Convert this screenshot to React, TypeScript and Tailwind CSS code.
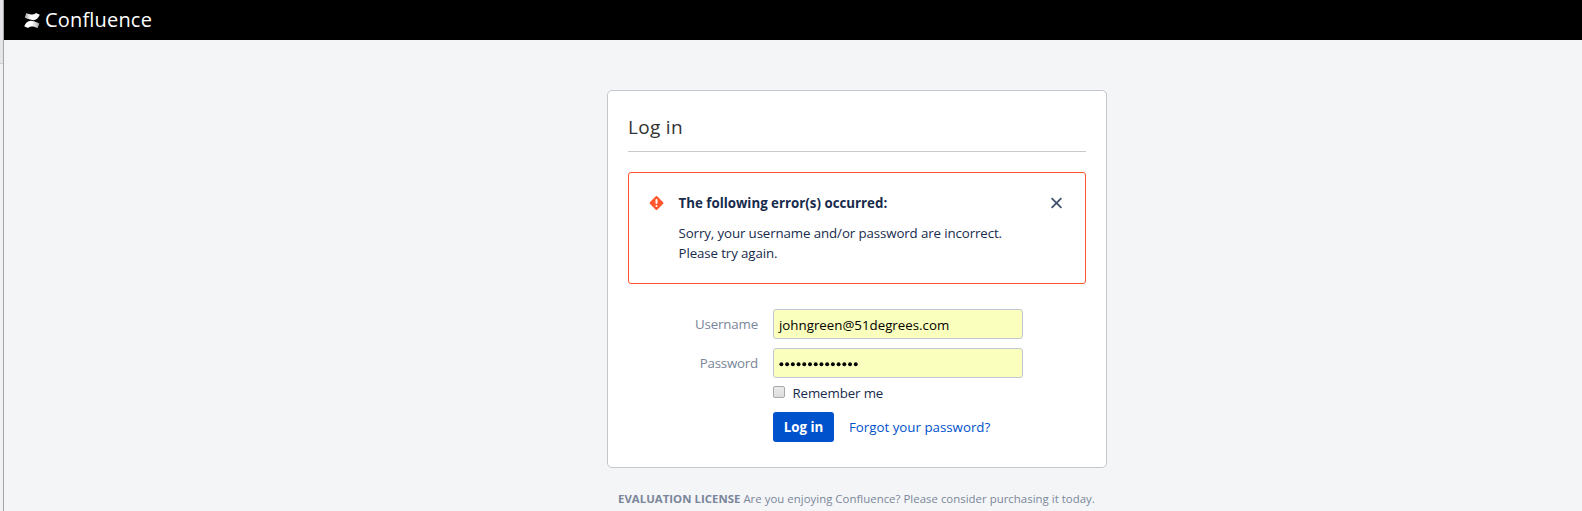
import React from 'react';

function ConfluenceMark() {
  return (
    <svg width="16" height="15" viewBox="0 0 16 14" preserveAspectRatio="none" className="shrink-0">
      <defs>
        <linearGradient id="upper" x1="1" y1="0" x2="0" y2="0">
          <stop offset="0" stopColor="#f4f4f4" />
          <stop offset="0.6" stopColor="#fff" />
          <stop offset="1" stopColor="#a0a0a0" />
        </linearGradient>
        <linearGradient id="lower" x1="0" y1="0" x2="1" y2="0">
          <stop offset="0" stopColor="#fff" />
          <stop offset="0.5" stopColor="#fff" />
          <stop offset="1" stopColor="#a8a8a8" />
        </linearGradient>
      </defs>
      <path d="M2.4 0 C4.8 1 6.8 1.6 8.6 1.4 C10.3 1.2 11.2 0.6 12 0 L15.8 1.7 C14.3 4.7 12.3 6.7 9.3 6.7 C6.5 6.7 3.7 5.5 0.7 4.3Z" fill="url(#upper)" />
      <path d="M13.6 14 C11.2 13 9.2 12.4 7.4 12.6 C5.7 12.8 4.8 13.4 4 14 L0.2 12.3 C1.7 9.3 3.7 7.3 6.7 7.3 C9.5 7.3 12.3 8.5 15.3 9.7Z" fill="url(#lower)" />
    </svg>
  );
}

function ErrorIcon() {
  return (
    <svg width="15" height="14" viewBox="-0.5 0 15 14" className="mt-[23px] ml-5 shrink-0">
      <path d="M6 0.6 a1.4 1.4 0 0 1 2 0 L13.4 6 a1.4 1.4 0 0 1 0 2 L8 13.4 a1.4 1.4 0 0 1 -2 0 L0.6 8 a1.4 1.4 0 0 1 0 -2Z" fill="#ff5630" />
      <path d="M7 4 V7" stroke="#fff" strokeWidth="2" strokeLinecap="round" />
      <circle cx="7" cy="10" r="1" fill="#fff" />
    </svg>
  );
}

export default function App() {
  return (
    <div className="flex h-[511px] w-full overflow-hidden bg-[#f4f5f7] font-['Open_Sans','Noto_Sans',sans-serif] text-[13.3px] text-[#172b4d]">
      <div className="flex w-1 shrink-0 flex-col border-r border-[#a5a5a5] bg-[#f1f1f1]">
        <div className="h-16 border-b border-[#cfcfcf] bg-[#e4e6e9]" />
      </div>
      <div className="flex min-w-0 grow flex-col">
        <header className="flex h-10 shrink-0 items-center bg-black pl-5">
          <ConfluenceMark />
          <span className="ml-[5px] text-[20px] leading-6 tracking-[0.18px] text-white">Confluence</span>
        </header>
        <main className="mt-[50px] ml-[603px] w-[500px]">
          <section className="h-[378px] rounded-[5px] border border-[#c4c7cc] bg-white px-5">
            <h2 className="h-[61px] border-b border-[#c7c9cb] pt-[22px] text-[19px] leading-7 tracking-[0.3px] text-[#333]">
              Log in
            </h2>
            <div className="mt-5 flex h-28 rounded-[3px] border border-[#ff5630]">
              <ErrorIcon />
              <div className="ml-[14.5px] grow pt-5 leading-5">
                <p className="font-bold">The following error(s) occurred:</p>
                <p className="mt-[10px] tracking-[-0.11px]">
                  Sorry, your username and/or password are incorrect.
                  <br />
                  Please try again.
                </p>
              </div>
              <svg width="13" height="12" viewBox="-0.5 0 13 12" className="mt-6 mr-[22px] shrink-0">
                <path d="M1.1 1.1 L10.9 10.9 M10.9 1.1 L1.1 10.9" stroke="#42526e" strokeWidth="1.8" />
              </svg>
            </div>
            <form className="mt-[25px] pl-[145px]">
              <div className="-ml-[145px] flex items-center">
                <label className="w-[130px] text-right leading-5 tracking-[-0.15px] text-[#7a869a]">Username</label>
                <div className="ml-[15px] flex h-[30px] w-[250px] items-center rounded-[3px] border border-[#c1c7d0] bg-[#faffbd] pt-[3px] pl-[5px] text-black">
                  johngreen@51degrees.com
                </div>
              </div>
              <div className="mt-[9px] -ml-[145px] flex items-center">
                <label className="w-[130px] text-right leading-5 tracking-[-0.2px] text-[#7a869a]">Password</label>
                <div className="ml-[15px] flex h-[30px] w-[250px] items-center rounded-[3px] border border-[#c1c7d0] bg-[#faffbd] pt-[2px] pl-[5px]">
                  <svg width="80" height="6" viewBox="0 0 80 6">
                    {Array.from({ length: 14 }, (_, i) => (
                      <circle key={i} cx={2.4 + i * 5.72} cy="3.3" r="1.95" fill="#000" />
                    ))}
                  </svg>
                </div>
              </div>
              <div className="mt-[5px] flex h-5 items-center">
                <span className="mb-[2px] h-3 w-3 rounded-[2px] border border-[#a9a9a9] bg-linear-to-b from-[#eaeaea] to-[#dcdcdc]" />
                <label className="ml-[7.5px] leading-5 tracking-[-0.12px]">Remember me</label>
              </div>
              <div className="mt-[9px] flex items-center">
                <button type="button" className="h-[30px] w-[61px] rounded-[3px] bg-[#0052cc] leading-5 font-bold text-white">Log in</button>
                <a className="ml-[15px] leading-5 text-[#0052cc]">Forgot your password?</a>
              </div>
            </form>
          </section>
          <p className="mt-[21px] pl-[11px] text-[11.4px] leading-5 tracking-[0.025px] whitespace-nowrap text-[#7a869a]">
            <b>EVALUATION LICENSE</b> Are you enjoying Confluence? Please consider purchasing it today.
          </p>
        </main>
      </div>
    </div>
  );
}
